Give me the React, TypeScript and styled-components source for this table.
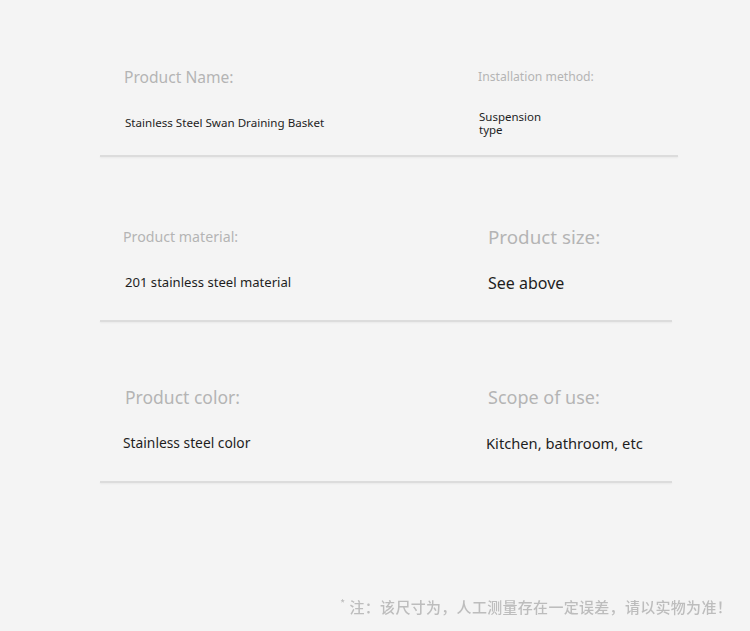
import React from 'react';
import styled, { createGlobalStyle } from 'styled-components';

const GlobalStyle = createGlobalStyle`
  html, body {
    margin: 0;
    padding: 0;
    background: #f4f4f4;
  }
  body {
    font-family: "Noto Sans", "Open Sans", "Noto Sans CJK SC", sans-serif;
    -webkit-font-smoothing: antialiased;
  }
`;

interface FieldData {
  label: string;
  value: string;
  labelSize: number;
  valueSize: number;
  labelX: number;
  valueX: number;
  narrow?: boolean;
}

interface SectionData {
  top: number;
  bottom: number;
  lineWidth: number;
  fields: [FieldData, FieldData];
}

const sections: SectionData[] = [
  {
    top: 67,
    bottom: 12,
    lineWidth: 578,
    fields: [
      { label: 'Product Name:', value: 'Stainless Steel Swan Draining Basket', labelSize: 15.6, valueSize: 11.6, labelX: 24, valueX: 25 },
      { label: 'Installation method:', value: 'Suspension type', labelSize: 12.2, valueSize: 11.5, labelX: 0, valueX: 1, narrow: true },
    ],
  },
  {
    top: 70,
    bottom: 17,
    lineWidth: 572,
    fields: [
      { label: 'Product material:', value: '201 stainless steel material', labelSize: 14.2, valueSize: 13.1, labelX: 23, valueX: 25 },
      { label: 'Product size:', value: 'See above', labelSize: 18.8, valueSize: 16, labelX: 10, valueX: 10 },
    ],
  },
  {
    top: 65,
    bottom: 18,
    lineWidth: 572,
    fields: [
      { label: 'Product color:', value: 'Stainless steel color', labelSize: 17.5, valueSize: 13.8, labelX: 25, valueX: 23 },
      { label: 'Scope of use:', value: 'Kitchen, bathroom, etc', labelSize: 18, valueSize: 14.7, labelX: 10, valueX: 8 },
    ],
  },
];

const Page = styled.div`
  width: 750px;
  height: 631px;
  overflow: hidden;
  padding-left: 100px;
  box-sizing: border-box;
`;

const Section = styled.section<{ $top: number; $bottom: number }>`
  padding-top: ${p => p.$top}px;
  display: flex;
  flex-direction: column;
  gap: ${p => p.$bottom}px;
`;

const Columns = styled.div`
  display: grid;
  grid-template-columns: 378px 1fr;
`;

const Field = styled.div`
  display: flex;
  flex-direction: column;
  gap: 16px;
`;

const Label = styled.div<{ $size: number; $x: number }>`
  height: 20px;
  line-height: 20px;
  padding-left: ${p => p.$x}px;
  font-size: ${p => p.$size}px;
  color: #b4b4b4;
  white-space: nowrap;
`;

const Value = styled.div<{ $size: number; $x: number; $narrow?: boolean }>`
  height: 40px;
  display: flex;
  align-items: center;
  padding-left: ${p => p.$x}px;
  font-size: ${p => p.$size}px;
  line-height: 1.15;
  color: #1e1e1e;
  max-width: ${p => (p.$narrow ? '80px' : 'none')};
  white-space: ${p => (p.$narrow ? 'normal' : 'nowrap')};
`;

const Divider = styled.div<{ $width: number }>`
  width: ${p => p.$width}px;
  height: 2px;
  background: #dcdcdc;
  box-shadow: 0 1px 2px rgba(0, 0, 0, 0.05);
`;

const Note = styled.p`
  margin: 110px 0 0;
  padding-right: 18px;
  text-align: right;
  font-size: 15px;
  font-weight: 500;
  letter-spacing: 0.3px;
  line-height: 20px;
  color: #bdbdbd;
  filter: blur(0.5px);
  font-family: "Noto Sans CJK SC", "Noto Sans", sans-serif;
`;

const Star = styled.sup`
  font-size: 10px;
  margin-right: 4px;
`;

export default function App() {
  return (
    <>
      <GlobalStyle />
      <Page>
        {sections.map((s, i) => (
          <Section key={i} $top={s.top} $bottom={s.bottom}>
            <Columns>
              {s.fields.map(f => (
                <Field key={f.label}>
                  <Label $size={f.labelSize} $x={f.labelX}>{f.label}</Label>
                  <Value $size={f.valueSize} $x={f.valueX} $narrow={f.narrow}>{f.value}</Value>
                </Field>
              ))}
            </Columns>
            <Divider $width={s.lineWidth} />
          </Section>
        ))}
        <Note>
          <Star>*</Star>注：该尺寸为，人工测量存在一定误差，请以实物为准！
        </Note>
      </Page>
    </>
  );
}
